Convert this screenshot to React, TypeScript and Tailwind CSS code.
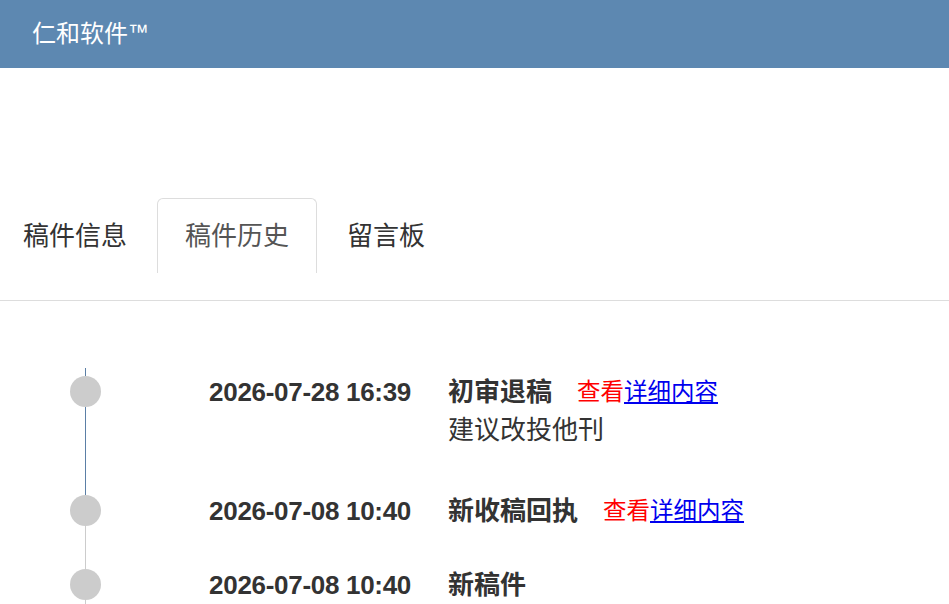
const records = [
  {
    time: '2026-07-28 16:39',
    title: '初审退稿',
    detail: true,
    note: '建议改投他刊',
    stub: 'bg-[#5b7fa6]',
    line: 'bg-[#5b7fa6]',
  },
  {
    time: '2026-07-08 10:40',
    title: '新收稿回执',
    detail: true,
    note: '',
    stub: 'bg-[#5b7fa6]',
    line: 'bg-[#cccccc]',
  },
  {
    time: '2026-07-08 10:40',
    title: '新稿件',
    detail: false,
    note: '',
    stub: 'bg-[#cccccc]',
    line: 'bg-[#cccccc]',
  },
];

const tabs = ['稿件信息', '稿件历史', '留言板'];

const App = () => {
  const active = 1;

  return (
    <div className="h-[604px] overflow-hidden bg-white font-['Liberation_Sans','Noto_Sans_CJK_SC',sans-serif] text-[#333]">
      <header className="h-[68px] bg-[#5d88b1] flex items-center pl-[32px]">
        <span className="text-white text-[24px] leading-none">仁和软件</span>
        <span className="text-white text-[21px] leading-none self-start mt-[21px]">™</span>
      </header>

      <nav className="mt-[130px] border-b border-[#dddddd] pb-[27px]">
        <ul className="flex -ml-[5px]">
          {tabs.map((t, i) => (
            <li
              key={t}
              className={
                'mr-[2px] px-[27px] pt-[18px] pb-[18px] text-[26px] leading-[38px] rounded-t-[6px] border border-b-0 ' +
                (i === active ? 'border-[#dddddd] text-[#555]' : 'border-transparent text-[#333]')
              }
            >
              {t}
            </li>
          ))}
        </ul>
      </nav>

      <div className="pt-[67px]">
        {records.map((r, i) => (
          <div key={i} className="flex">
            <div className="ml-[70px] w-[31px] flex flex-col items-center">
              <div className={'w-px h-[8px] ' + r.stub} />
              <div className="w-[31px] h-[31px] rounded-full bg-[#cccccc] shrink-0" />
              <div className={'w-px flex-1 ' + r.line} />
            </div>
            <div className="w-[310px] pt-[5px] text-right font-bold text-[26px] leading-[38px] tracking-[-0.3px]">
              {r.time}
            </div>
            <div className="pl-[37px] pt-[5px] pb-[31px]">
              <div className="flex items-center leading-[38px]">
                <span className="font-bold text-[26px]">{r.title}</span>
                {r.detail && (
                  <span className="ml-[25px] text-[23.5px]">
                    <span className="text-[#ff0000]">查看</span>
                    <a className="text-[#0000ee] underline underline-offset-[2px]">详细内容</a>
                  </span>
                )}
              </div>
              {r.note && <p className="text-[26px] leading-[38px] mb-[7px]">{r.note}</p>}
            </div>
          </div>
        ))}
      </div>
    </div>
  );
};

export default App;
